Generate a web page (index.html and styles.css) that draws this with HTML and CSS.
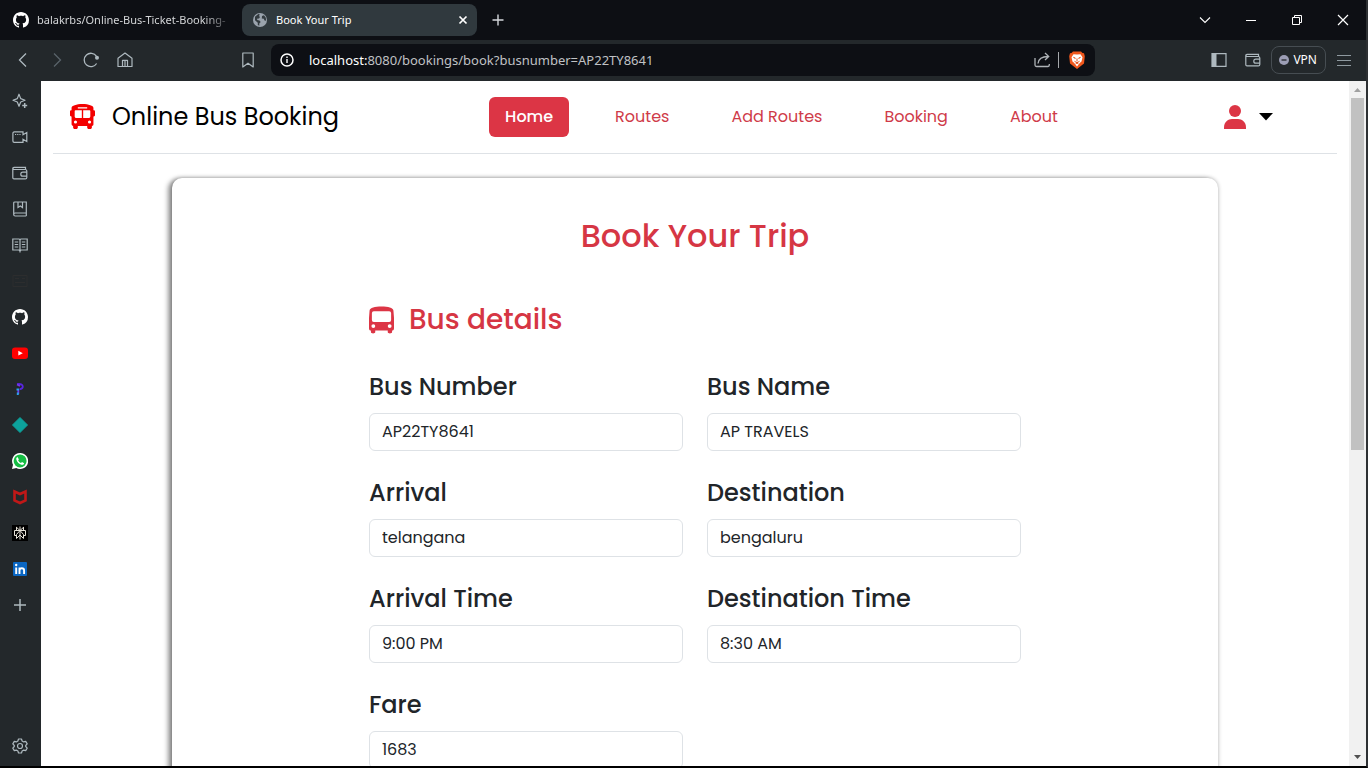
FILE: index.html
```html
<!DOCTYPE html>
<html lang="en">
<head>
<meta charset="utf-8">
<title>Book Your Trip</title>
<link rel="stylesheet" href="styles.css">
</head>
<body>
<svg class="defs" aria-hidden="true">
  <symbol id="github" viewBox="0 0 16 16"><path fill="#fff" d="M8 0C3.58 0 0 3.58 0 8c0 3.54 2.29 6.53 5.47 7.59.4.07.55-.17.55-.38 0-.19-.01-.82-.01-1.49-2.01.37-2.53-.49-2.69-.94-.09-.23-.48-.94-.82-1.13-.28-.15-.68-.52-.01-.53.63-.01 1.08.58 1.23.82.72 1.21 1.87.87 2.33.66.07-.52.28-.87.51-1.07-1.78-.2-3.64-.89-3.64-3.95 0-.87.31-1.59.82-2.15-.08-.2-.36-1.02.08-2.12 0 0 .67-.21 2.2.82.64-.18 1.32-.27 2-.27s1.36.09 2 .27c1.53-1.04 2.2-.82 2.2-.82.44 1.1.16 1.92.08 2.12.51.56.82 1.27.82 2.15 0 3.07-1.87 3.75-3.65 3.95.29.25.54.73.54 1.48 0 1.07-.01 1.93-.01 2.2 0 .21.15.46.55.38A8.01 8.01 0 0 0 16 8c0-4.42-3.58-8-8-8z"/></symbol>
  <symbol id="wallet" viewBox="0 0 16 16"><path fill="none" stroke="currentColor" stroke-width="1.2" d="M13.5 4.5V2.3H2a1.2 1.2 0 0 0-1.2 1.2v9A1.2 1.2 0 0 0 2 13.9h11.3a1.5 1.5 0 0 0 1.5-1.5V6a1.5 1.5 0 0 0-1.5-1.5H2.2A1.3 1.3 0 0 1 .9 3.3M15 7.2h-4.2a2 2 0 0 0 0 4H15"/></symbol>
</svg>

<div class="window">
  <header class="tabs">
    <button class="tab"><svg class="i16"><use href="#github"/></svg><span class="tab-text fade">balakrbs/Online-Bus-Ticket-Booking-</span></button>
    <div class="tab active">
      <svg class="i14" viewBox="0 0 14 14"><circle cx="7" cy="7" r="7" fill="#9aa3ad"/><path fill="#333b40" d="M2 3.7 5.3 1l1.6.6-.9 1.5 1 .8-1 1.6-2 .3.3 1.3 2.2.3 1.2 1.7-1.4 1.5v2.2L4.800 12V9.700L2 7.200zM9 3l2-.8 1.800 2.600.3 3-1.600-.3-.7-1.800-2-.2z"/></svg>
      <span class="tab-text">Book Your Trip</span>
      <button class="plain close" aria-label="Close tab"><svg class="i10" viewBox="0 0 10 10"><path d="m1.500 1.500 7 7m0-7-7 7" stroke="#fff" stroke-width="1.700"/></svg></button>
    </div>
    <button class="plain newtab" aria-label="New tab"><svg class="i12" viewBox="0 0 12 12"><path d="M6 .5v11M.5 6h11" stroke="#d5d8dc" stroke-width="1.400"/></svg></button>
    <div class="wincontrols">
      <button class="plain" aria-label="Search tabs"><svg class="i12" viewBox="0 0 12 12"><path d="m1 3.500 5 5 5-5" fill="none" stroke="#fff" stroke-width="1.100"/></svg></button>
      <button class="plain" aria-label="Minimize"><svg class="i12" viewBox="0 0 12 12"><path d="M1 6.500h10" stroke="#fff"/></svg></button>
      <button class="plain" aria-label="Restore"><svg class="i12" viewBox="0 0 12 12"><path d="M1.500 3.500h7v7h-7zM3.500 3.500v-2h7v7h-2" fill="none" stroke="#fff"/></svg></button>
      <button class="plain" aria-label="Close"><svg class="i12" viewBox="0 0 12 12"><path d="m1 1 10 10M11 1 1 11" stroke="#fff" stroke-width="1.200"/></svg></button>
    </div>
  </header>

  <div class="toolbar">
    <div class="navbtns">
      <button class="plain" aria-label="Back"><svg class="i16" viewBox="0 0 16 16"><path d="M11 1.500 4.500 8l6.500 6.500" fill="none" stroke="#aeb9bf" stroke-width="1.300"/></svg></button>
      <button class="plain" aria-label="Forward"><svg class="i16" viewBox="0 0 16 16"><path d="M5 1.500 11.500 8 5 14.500" fill="none" stroke="#59636a" stroke-width="1.300"/></svg></button>
      <button class="plain" aria-label="Reload"><svg class="i16" viewBox="0 0 16 16"><path d="M13.600 11.500A6.700 6.700 0 1 1 13.500 4.300" fill="none" stroke="#aeb9bf" stroke-width="1.300"/><circle cx="14" cy="5.800" r="2" fill="#aeb9bf"/></svg></button>
      <button class="plain" aria-label="Home"><svg class="i16" viewBox="0 0 16 16"><path d="M1 6.300 8 1l7 5.300v8.200H1zM5.500 14.500V8.300h5v6.200M8 8.500v6" fill="none" stroke="#aeb9bf" stroke-width="1.200" stroke-linejoin="round"/></svg></button>
    </div>
    <button class="plain bookmark" aria-label="Bookmark"><svg class="i16" viewBox="0 0 16 16"><path d="M2.800 1h10.400v14L8 11.200 2.800 15z" fill="none" stroke="#aeb9bf" stroke-width="1.200" stroke-linejoin="round"/></svg></button>
    <div class="address">
      <svg class="i14" viewBox="0 0 14 14"><circle cx="7" cy="7" r="6" fill="none" stroke="#fff" stroke-width="1.500"/><path d="M7 6v4M7 3.500V5" stroke="#fff" stroke-width="1.400"/></svg>
      <span class="url"><b>localhost:</b>8080/bookings/book?busnumber=AP22TY8641</span>
      <button class="plain" aria-label="Share"><svg class="i16" viewBox="0 0 16 16"><path d="M1 6v7a1.500 1.500 0 0 0 1.500 1.500H14a1.500 1.500 0 0 0 1.300-1.500V12M4 11.500C4.500 7 7.500 4.500 14 4.500M11 1l3.700 3.500L11 8" fill="none" stroke="#aeb2b6" stroke-width="1.300"/></svg></button>
      <span class="divider"></span>
      <button class="plain" aria-label="Brave Shields"><svg class="brave" viewBox="0 0 16 18"><path fill="#f0581d" d="M4 .5h8L13.500 2l1.500.2.8 3-.8 7.300L8 18l-7-5.500L.2 5.200l.8-3L2.500 2z"/><path fill="#fff" d="M4.500 3.200 8 3.600l3.500-.4 2 3-1 4.200-1.500 1.400L8 15.500 5 11.800l-1.500-1.400-1-4.200z"/><path d="m4.300 6.300 2 .7-.4.800M11.700 6.300l-2 .7.400.800M8 7.500v3M5.500 10.300 8 11.800l2.500-1.500M6.500 13 8 12l1.500 1" fill="none" stroke="#e5531d"/></svg></button>
    </div>
    <div class="tools">
      <button class="plain" aria-label="Sidebar"><svg class="i16" viewBox="0 0 16 16"><path d="M1 1.700h14v12.600H1z" fill="none" stroke="#aeb9bf" stroke-width="1.200"/><path d="M1 1.700h4.500v12.600H1z" fill="#aeb9bf"/></svg></button>
      <button class="plain" aria-label="Wallet"><svg class="i16"><use href="#wallet"/></svg></button>
      <button class="vpn"><svg class="i10" viewBox="0 0 10 10"><circle cx="5" cy="5" r="5" fill="#9c9eb5"/><path d="M2.500 5h5" stroke="#24282c" stroke-width="1.300"/></svg>VPN</button>
      <button class="plain" aria-label="Menu"><svg class="i16" viewBox="0 0 16 16"><path d="M1 3.500h14M1 8.500h14M1 13.500h14" stroke="#8f9aa0" stroke-width="1.200"/></svg></button>
    </div>
  </div>

  <div class="main">
    <aside class="side">
      <button class="plain" aria-label="Leo"><svg class="i16" viewBox="0 0 16 16"><path d="M7 1.200 8.700 5.600 13 7.300 8.700 9l-1.700 4.300L5.300 9 1 7.300l4.300-1.700z" fill="none" stroke="currentColor" stroke-width="1.200" stroke-linejoin="round"/><path d="M12.700 10v5M10.200 12.500h5" stroke="currentColor" stroke-width="1.500"/></svg></button>
      <button class="plain" aria-label="Talk"><svg class="i16" viewBox="0 0 16 16"><path d="M2.500 2.800H11v3l3.800-2.300v9L11 10.300v3H2.200A1.300 1.300 0 0 1 .9 12V4.300A1.500 1.500 0 0 1 2.500 2.800z" fill="none" stroke="currentColor" stroke-width="1.200"/><path d="M3 5.500h1.200m1 0h1.200m1 0h1.200" stroke="currentColor"/></svg></button>
      <button class="plain" aria-label="Wallet"><svg class="i16"><use href="#wallet"/></svg></button>
      <button class="plain" aria-label="Bookmarks"><svg class="i16" viewBox="0 0 16 16"><path d="M14.300 12V1H2.700a1 1 0 0 0-1 1v11.500a1.500 1.500 0 0 0 1.500 1.500h11.100M14.300 12H3.200a1.500 1.500 0 0 0-1.500 1.500M14.300 12v3M6 1v5.500L8.300 5l2.200 1.500V1" fill="none" stroke="currentColor" stroke-width="1.200"/></svg></button>
      <button class="plain" aria-label="Reading list"><svg class="i16" viewBox="0 0 16 16"><path d="M.8 2h6.400L8 3l.8-1h6.400v11H9l-1 1-1-1H.8zM8 3v12.500M2.700 5h3.500m-3.500 2.500h3.500M2.700 10h3.500m3.600-5h3.500M9.800 7.500h3.500M9.800 10h3.500" fill="none" stroke="currentColor" stroke-width="1.200"/></svg></button>
      <button class="plain dim" aria-label="News"><svg class="i16" viewBox="0 0 16 16"><path d="M1 2.500h14v11H1zM3 5.500h4M3 9.500h10M10 5.500h3" fill="none" stroke="currentColor"/></svg></button>
      <button class="plain" aria-label="GitHub"><svg class="i16"><use href="#github"/></svg></button>
      <button class="plain" aria-label="YouTube"><svg class="i16" viewBox="0 0 16 16"><rect y="2.500" width="16" height="11.500" rx="3" fill="#f00"/><path d="m6.300 5.800 4.500 2.400-4.500 2.400z" fill="#fff"/></svg></button>
      <button class="plain" aria-label="Prime"><svg class="i16" viewBox="0 0 16 16"><path d="M5 3.200c3.500-.7 5.800.4 5.800 2.300 0 1.700-1.300 2.600-3.300 2.900" fill="none" stroke="#5925e2" stroke-width="1.800"/><path d="M5 3.500 8 5M6.300 8.500V13" stroke="#7634ec" stroke-width="1.800"/><path d="M4.500 7.500H7V9.500H4.500zM4.800 11.500h2V14h-2z" fill="#28a5e8"/></svg></button>
      <button class="plain" aria-label="Diamond"><svg class="i16" viewBox="0 0 16 16"><path d="m8 .5 7.500 7.500L8 15.500.5 8z" fill="#0ca29c" stroke="#0ca29c" stroke-linejoin="round"/></svg></button>
      <button class="plain" aria-label="WhatsApp"><svg class="i16" viewBox="0 0 16 16"><path d="M8 0a8 8 0 0 0-7 11.800L0 16l4.300-1A8 8 0 1 0 8 0z" fill="#fff"/><circle cx="8.100" cy="7.900" r="6.500" fill="#16bd44"/><path d="M5.500 4c-1 .5-1.500 1.500-1.100 2.700.8 2.500 2.600 4.200 5.100 5 1.300.3 2.300-.2 2.600-1.500l-2.100-1.100-1 1C7.600 9.500 6.700 8.500 6.100 7.300l.8-.9z" fill="#fff"/></svg></button>
      <button class="plain" aria-label="McAfee"><svg class="i16" viewBox="0 0 16 16"><path d="M2.500 2.500 8 5l5.500-2.500v9L8 14l-5.500-2.500z" fill="none" stroke="#c01818" stroke-width="2.600"/></svg></button>
      <button class="plain" aria-label="Perplexity"><svg class="i16" viewBox="0 0 16 16"><path d="M0 0h16v16H0z" fill="#000"/><path d="M8 1.500v13M4.500 2v3.500M11.500 2v3.500M4.500 2.300 8 5.500l3.500-3.200M2.500 5.500h11v5h-2M2.500 5.500v5h2M8 5.500l-3.500 4v4L8 10l3.500 3.500v-4z" fill="none" stroke="#e5e2d8"/></svg></button>
      <button class="plain" aria-label="LinkedIn"><svg class="i16" viewBox="0 0 16 16"><rect x="1" y="1" width="14" height="14" rx="1" fill="#0a66c2"/><path d="M4.200 6.500V13M7.500 13V6.500M7.500 9.500c0-3 4.600-3 4.600 0V13" fill="none" stroke="#fff" stroke-width="1.900"/><circle cx="4.200" cy="4" r="1.200" fill="#fff"/></svg></button>
      <button class="plain" aria-label="Add"><svg class="i16" viewBox="0 0 16 16"><path d="M8 2v12M2 8h12" stroke="currentColor" stroke-width="1.500"/></svg></button>
      <button class="plain gear" aria-label="Settings"><svg class="i16" viewBox="0 0 16 16"><path d="M6.500 1h3l.6 2 1.600.9 2-.5 1.500 2.500L13.700 7.500v1l1.500 1.600-1.500 2.500-2-.5-1.600.9-.6 2h-3l-.6-2-1.600-.9-2 .5L.8 10.100l1.500-1.600v-1L.8 5.900l1.500-2.500 2 .5L5.900 3z" fill="none" stroke="currentColor" stroke-width="1.200" stroke-linejoin="round"/><circle cx="8" cy="8" r="2.500" fill="none" stroke="currentColor" stroke-width="1.200"/></svg></button>
    </aside>

    <div class="page">
      <header class="site">
        <a class="brand" href="#">
          <svg class="logo" viewBox="0 0 512 512"><path fill="#f30000" fill-rule="evenodd" d="M488 128h-8V80c0-45-99-80-224-80S32 35 32 80v48h-8c-13 0-24 11-24 24v80c0 13 11 24 24 24h8v160c0 18 14 32 32 32v32c0 18 14 32 32 32h32c18 0 32-14 32-32v-32h192v32c0 18 14 32 32 32h32c18 0 32-14 32-32v-32c20 0 32-13 32-32V256h8c13 0 24-11 24-24v-80c0-13-11-24-24-24zM160 64h192v28H160zM112 400a32 32 0 1 1 0-64 32 32 0 0 1 0 64zm-16-144V144c0-10 6-16 16-16h130v160H128c-18 0-32-14-32-32zm174 32V128h130c10 0 16 6 16 16v112c0 18-14 32-32 32zm130 112a32 32 0 1 1 0-64 32 32 0 0 1 0 64z"/></svg>
          Online Bus Booking
        </a>
        <nav class="menu">
          <a class="current" href="#">Home</a><a href="#">Routes</a><a href="#">Add Routes</a><a href="#">Booking</a><a href="#">About</a>
        </nav>
        <button class="plain user" aria-label="Account">
          <svg class="person" viewBox="0 0 22 24"><circle cx="11" cy="6" r="6" fill="#dc3545"/><path d="M0 24v-1.500C0 17 4 14 8 14h6c4 0 8 3 8 8.500V24z" fill="#dc3545"/></svg>
          <svg class="caret" viewBox="0 0 14 8"><path d="M0 0h14L7 7.500z"/></svg>
        </button>
      </header>

      <main class="card">
        <h1>Book Your Trip</h1>
        <form class="form">
          <h2><svg class="bus" viewBox="0 0 26 28"><path fill="#dc3545" fill-rule="evenodd" d="M13 0C6 0 1 1.500.6 4L0 12v10.500C0 24 .7 24.800 2 25v1.500c0 2 4.500 2 4.500 0V25h13v1.500c0 2 4.500 2 4.500 0V25c1.300-.2 2-1 2-2.500V12l-.6-8C25 1.500 20 0 13 0zM5 5h16q2 0 2 2v7q0 2-2 2H5q-2 0-2-2V7q0-2 2-2zm-.5 13.300a2 2 0 1 1 0 4 2 2 0 0 1 0-4zm17 0a2 2 0 1 1 0 4 2 2 0 0 1 0-4z"/></svg>Bus details</h2>
          <div class="fields">
            <div class="field"><label for="number">Bus Number</label><input id="number" value="AP22TY8641"></div>
            <div class="field"><label for="name">Bus Name</label><input id="name" value="AP TRAVELS"></div>
            <div class="field"><label for="arrival">Arrival</label><input id="arrival" value="telangana"></div>
            <div class="field"><label for="destination">Destination</label><input id="destination" value="bengaluru"></div>
            <div class="field"><label for="atime">Arrival Time</label><input id="atime" value="9:00 PM"></div>
            <div class="field"><label for="dtime">Destination Time</label><input id="dtime" value="8:30 AM"></div>
            <div class="field"><label for="fare">Fare</label><input id="fare" value="1683"></div>
          </div>
        </form>
      </main>
    </div>

    <div class="scroll" aria-hidden="true">
      <svg class="arrow" viewBox="0 0 17 17"><path d="M5 11h7L8.500 7z" fill="#a0a0a0"/></svg>
      <div class="track"><div class="thumb"></div></div>
      <svg class="arrow" viewBox="0 0 17 17"><path d="M5 6h7l-3.500 4z" fill="#505050"/></svg>
    </div>
  </div>
</div>
</body>
</html>
```
FILE: styles.css
```css
* { box-sizing: border-box; }
body { margin: 0; background: #000; font-family: "Poppins", "Inter", sans-serif; font-size: 16px; color: #212529; }
button { font: inherit; color: inherit; cursor: pointer; }
a { text-decoration: none; }
svg { display: block; flex: none; }
.defs { display: none; }
.i16 { width: 16px; height: 16px; }
.i14 { width: 14px; height: 14px; }
.i12 { width: 12px; height: 12px; }
.i10 { width: 10px; height: 10px; }
.plain { display: flex; align-items: center; justify-content: center; padding: 0; border: 0; background: none; }

.window { display: flex; flex-direction: column; height: 100vh; overflow: hidden; border-right: 2px solid #2d3033; border-bottom: 2px solid #000; background: #0d0f14; }
.tabs { display: flex; align-items: center; flex: none; height: 40px; padding-left: 5px; font: 11px/16px "Segoe UI", "Noto Sans", sans-serif; }
.tab { display: flex; align-items: center; gap: 8px; width: 237px; height: 32px; padding: 0 8px; border: 0; border-radius: 8px; background: none; color: #d3d5d7; text-align: left; }
.tab.active { gap: 9px; width: 235px; padding: 0 8px 0 11px; background: #30393e; color: #fff; }
.tab-text { flex: 1; white-space: nowrap; }
.fade { mask-image: linear-gradient(to right, #000 85%, transparent); }
.close { width: 12px; height: 16px; }
.newtab { width: 42px; height: 32px; }
.wincontrols { display: flex; margin-left: auto; }
.wincontrols .plain { width: 46px; height: 40px; }

.toolbar { display: flex; align-items: center; flex: none; height: 41px; padding-bottom: 1px; background: #23282b; font: 12px/16px "Segoe UI", "Noto Sans", sans-serif; }
.navbtns { display: flex; padding-left: 6px; }
.navbtns .plain, .bookmark { width: 34px; height: 32px; }
.bookmark { margin-left: 89px; }
.address { display: flex; align-items: center; gap: 8px; width: 824px; height: 32px; margin-left: 6px; padding: 0 8px 0 9px; border-radius: 8px; background: #0d0f14; color: #c0c2c5; }
.url { flex: 1; padding-left: 7px; font-size: 13px; white-space: nowrap; }
.url b { font-weight: 400; color: #fff; }
.divider { width: 1px; height: 16px; background: #a5a8ab; }
.brave { width: 16px; height: 18px; margin: 0 2px; }
.tools { display: flex; align-items: center; gap: 10px; margin-left: auto; padding-right: 14px; color: #aeb9bf; }
.tools .plain + .plain { margin-left: 8px; }
.vpn { display: flex; align-items: center; gap: 4px; height: 28px; padding: 0 8px 0 7px; border: 1px solid #464d52; border-radius: 8px; background: none; color: #fff; }

.main { display: flex; flex: 1; min-height: 0; }
.side { display: flex; flex-direction: column; flex: none; width: 41px; padding: 2px 1px 2px 0; background: #23282b; color: #aeb9bf; }
.side .plain { height: 36px; flex: none; }
.side .dim { color: #2c2d2e; }
.side .gear { margin-top: auto; }

.page { flex: 1; min-width: 0; overflow: hidden; background: #fff; }
.site { display: flex; align-items: center; justify-content: space-between; height: 73px; margin: 0 12px 24px; padding: 0 64px 1px 17px; border-bottom: 1px solid #dee2e6; }
.brand { display: flex; align-items: center; gap: 17px; font-size: 24px; line-height: 36px; color: #000; }
.logo { width: 25px; height: 25px; }
.menu { display: flex; gap: 30px; }
.menu a { padding: 8px 16px; border-radius: 6px; line-height: 24px; color: #cf3b49; }
.menu .current { background: #dc3545; color: #fff; font-weight: 500; }
.user { gap: 13px; }
.person { width: 22px; height: 24px; }
.caret { width: 14px; height: 8px; }

.card { width: 80%; margin: 0 auto; padding: 38px 24px; border-radius: 10px; background: #fff; box-shadow: -4px 1px 5px rgba(0, 0, 0, .4), 0 0 4px rgba(0, 0, 0, .3); }
h1, h2 { margin: 0; font-weight: 500; color: #d63644; }
h1 { font-size: 32px; line-height: 40px; text-align: center; }
.form { max-width: 652px; margin: 0 auto; }
h2 { display: flex; align-items: center; gap: 15px; margin: 46px 0 31px; font-size: 28px; line-height: 36px; }
.bus { width: 25px; height: 28px; }
.fields { display: grid; grid-template-columns: 1fr 1fr; gap: 24px; }
.field { display: flex; flex-direction: column; gap: 8px; }
label { font-size: 24px; font-weight: 500; line-height: 36px; }
input { width: 100%; height: 38px; padding: 0 12px 2px; border: 1px solid #dee2e6; border-radius: 6px; background: #fff; color: #212529; font: inherit; }

.scroll { display: flex; flex-direction: column; flex: none; width: 17px; background: #f1f1f1; }
.arrow { width: 17px; height: 17px; }
.track { flex: 1; padding: 0 2px; }
.thumb { height: 54%; background: #c1c1c1; }
```
